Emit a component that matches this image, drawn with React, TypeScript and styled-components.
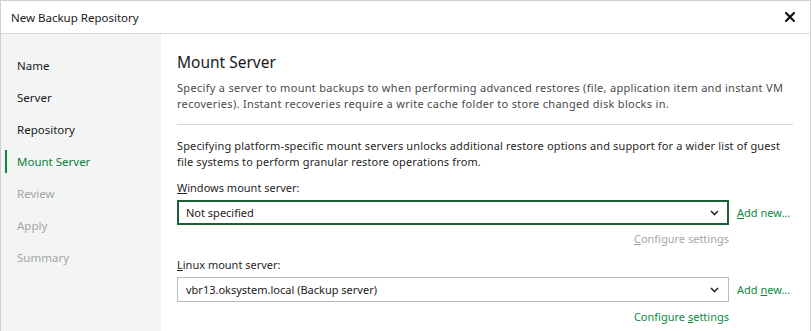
import React from "react";
import styled, { createGlobalStyle } from "styled-components";

const GlobalStyle = createGlobalStyle`
  html, body {
    margin: 0;
    padding: 0;
    background: #ffffff;
  }
  body {
    font-family: "Segoe UI", "Noto Sans", sans-serif;
    font-size: 11px;
    color: #1f1f1f;
  }
`;

const Window = styled.div`
  width: 811px;
  height: 332px;
  box-sizing: border-box;
  border: 1px solid #cdd1d1;
  border-bottom: none;
  display: flex;
  flex-direction: column;
  overflow: hidden;
  background: #ffffff;
`;

const TitleBar = styled.div`
  height: 32px;
  flex-shrink: 0;
  display: flex;
  align-items: center;
  justify-content: space-between;
  padding: 0 14px 0 10px;
  border-bottom: 1px solid #d8dbdb;
  font-size: 11.5px;
  color: #1a1a1a;
`;

const CloseButton = styled.div`
  width: 12px;
  height: 12px;
  display: flex;
  align-items: center;
  justify-content: center;
  cursor: pointer;
`;

const Body = styled.div`
  flex: 1;
  display: flex;
  min-height: 0;
`;

const Sidebar = styled.nav`
  width: 160px;
  flex-shrink: 0;
  background: #f3f4f4;
  display: flex;
  flex-direction: column;
  padding-top: 15px;
`;

const StepItem = styled.div<{ $state: "done" | "active" | "pending" }>`
  position: relative;
  height: 32px;
  display: flex;
  align-items: center;
  padding-left: 16px;
  font-size: 11.5px;
  color: ${(p) =>
    p.$state === "active" ? "#0b7f3b" : p.$state === "pending" ? "#a3a6a6" : "#1a1a1a"};

  &::before {
    content: "";
    display: ${(p) => (p.$state === "active" ? "block" : "none")};
    position: absolute;
    left: 4px;
    top: 5px;
    width: 2px;
    height: 23px;
    background: #0b8a3f;
  }
`;

const Content = styled.main`
  flex: 1;
  display: flex;
  flex-direction: column;
  padding: 17px 17px 0 16px;
`;

const Heading = styled.h1`
  margin: 0;
  font-size: 15.5px;
  font-weight: 400;
  line-height: 22px;
  color: #1a1a1a;
`;

const Paragraph = styled.p<{ $top: number; $muted?: boolean; $spacing: number }>`
  margin: ${(p) => p.$top}px 0 0;
  line-height: 16px;
  letter-spacing: ${(p) => p.$spacing}px;
  color: ${(p) => (p.$muted ? "#4a4a4a" : "#1f1f1f")};
  white-space: nowrap;
`;

const Divider = styled.hr`
  margin: 12px 0 0;
  border: none;
  border-top: 1px solid #d6d9d9;
  height: 0;
`;

const FieldLabel = styled.label<{ $top: number }>`
  margin-top: ${(p) => p.$top}px;
  line-height: 16px;
  color: #1f1f1f;
`;

const FieldRow = styled.div`
  margin-top: 4px;
  display: flex;
  align-items: center;
  gap: 8px;
`;

const Combo = styled.div<{ $focused?: boolean }>`
  width: 552px;
  height: 25px;
  box-sizing: border-box;
  border: ${(p) => (p.$focused ? "2px solid #1d5e33" : "1px solid #b8bcbc")};
  display: flex;
  align-items: center;
  justify-content: space-between;
  padding: 0 ${(p) => (p.$focused ? 8 : 9)}px 0 ${(p) => (p.$focused ? 7 : 8)}px;
  color: #1a1a1a;
`;

const LinkText = styled.span<{ $disabled?: boolean }>`
  color: ${(p) => (p.$disabled ? "#a3a6a6" : "#0b8a3f")};
  cursor: ${(p) => (p.$disabled ? "default" : "pointer")};
  line-height: 16px;
  white-space: nowrap;
`;

const SettingsRow = styled.div<{ $top: number }>`
  width: 552px;
  margin-top: ${(p) => p.$top}px;
  display: flex;
  justify-content: flex-end;
`;

const Chevron = () => (
  <svg width="9" height="6" viewBox="0 0 9 6">
    <polyline points="1,1 4.5,4.5 8,1" fill="none" stroke="#2a2a2a" strokeWidth="1.6" />
  </svg>
);

const CloseIcon = () => (
  <svg width="10" height="10" viewBox="0 0 10 10">
    <path d="M1 1 L9 9 M9 1 L1 9" stroke="#111" strokeWidth="2.2" strokeLinecap="square" />
  </svg>
);

const steps: { label: string; state: "done" | "active" | "pending" }[] = [
  { label: "Name", state: "done" },
  { label: "Server", state: "done" },
  { label: "Repository", state: "done" },
  { label: "Mount Server", state: "active" },
  { label: "Review", state: "pending" },
  { label: "Apply", state: "pending" },
  { label: "Summary", state: "pending" },
];

export default function App() {
  return (
    <>
      <GlobalStyle />
      <Window>
        <TitleBar>
          <span>New Backup Repository</span>
          <CloseButton>
            <CloseIcon />
          </CloseButton>
        </TitleBar>
        <Body>
          <Sidebar>
            {steps.map((s) => (
              <StepItem key={s.label} $state={s.state}>
                {s.label}
              </StepItem>
            ))}
          </Sidebar>
          <Content>
            <Heading>Mount Server</Heading>
            <Paragraph $top={7} $muted $spacing={0.3}>
              Specify a server to mount backups to when performing advanced restores (file, application item and instant VM
              <br />
              recoveries). Instant recoveries require a write cache folder to store changed disk blocks in.
            </Paragraph>
            <Divider />
            <Paragraph $top={13} $spacing={0.14}>
              Specifying platform-specific mount servers unlocks additional restore options and support for a wider list of guest
              <br />
              file systems to perform granular restore operations from.
            </Paragraph>

            <FieldLabel $top={10}>
              <u>W</u>indows mount server:
            </FieldLabel>
            <FieldRow>
              <Combo $focused>
                <span>Not specified</span>
                <Chevron />
              </Combo>
              <LinkText>
                <u>A</u>dd new...
              </LinkText>
            </FieldRow>
            <SettingsRow $top={6}>
              <LinkText $disabled>
                <u>C</u>onfigure settings
              </LinkText>
            </SettingsRow>

            <FieldLabel $top={10}>
              <u>L</u>inux mount server:
            </FieldLabel>
            <FieldRow>
              <Combo>
                <span>vbr13.oksystem.local (Backup server)</span>
                <Chevron />
              </Combo>
              <LinkText>
                Add <u>n</u>ew...
              </LinkText>
            </FieldRow>
            <SettingsRow $top={7}>
              <LinkText>
                Configure <u>s</u>ettings
              </LinkText>
            </SettingsRow>
          </Content>
        </Body>
      </Window>
    </>
  );
}
